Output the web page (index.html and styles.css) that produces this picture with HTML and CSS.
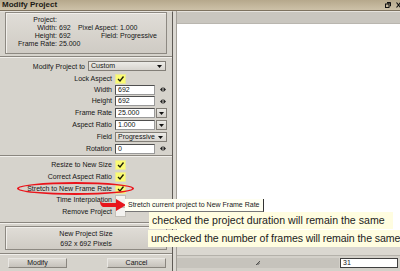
FILE: index.html
```html
<!DOCTYPE html>
<html>
<head>
<meta charset="utf-8">
<link rel="stylesheet" href="styles.css">
</head>
<body>
<div class="window">
  <div class="titlebar">
    <span class="title">Modify Project</span>
    <span class="tb-icons">
      <svg class="tb-restore" width="6" height="6" viewBox="0 0 6 6"><path d="M2 0.5H5.5V4H4.5" fill="none" stroke="#111" stroke-width="1"/><rect x="0.5" y="2" width="3.5" height="3.5" fill="none" stroke="#111" stroke-width="1"/><path d="M2 1H5.5" stroke="#111" stroke-width="1.2"/></svg>
      <svg class="tb-close" width="5" height="6" viewBox="0 0 5 6"><path d="M0.5 0.5L4.5 5.5M4.5 0.5L0.5 5.5" stroke="#111" stroke-width="1.2"/></svg>
    </span>
  </div>
  <div class="body">
    <div class="left">
      <div class="info">
        <div class="info-grid">
          <span class="k">Project:</span><span></span><span></span><span></span>
          <span class="k">Width:</span><span class="v">692</span><span class="k">Pixel Aspect:</span><span class="v">1.000</span>
          <span class="k">Height:</span><span class="v">692</span><span class="k">Field:</span><span class="v">Progressive</span>
          <span class="k">Frame Rate:</span><span class="v">25.000</span><span></span><span></span>
        </div>
      </div>
      <div class="sep"></div>
      <div class="modify-row">
        <span class="modify-label">Modify Project to</span>
        <div class="select wide"><span>Custom</span><svg class="dd" width="5" height="3" viewBox="0 0 5 3"><path d="M0 0H5L2.5 3Z" fill="#111"/></svg></div>
      </div>
      <div class="controls">
        <span class="lbl">Lock Aspect</span>
        <div class="ctl"><div class="cb on"><svg width="9" height="8" viewBox="0 0 9 8"><path d="M2 4L4 6L7.5 1.5" fill="none" stroke="#1d1d08" stroke-width="1.3"/></svg></div></div>

        <span class="lbl">Width</span>
        <div class="ctl"><div class="input">692</div><svg class="spin" width="6" height="5" viewBox="0 0 6 5"><path d="M0 2.5L2.5 0V5Z M6 2.5L3.5 0V5Z" fill="#222"/></svg></div>

        <span class="lbl">Height</span>
        <div class="ctl"><div class="input">692</div><svg class="spin" width="6" height="5" viewBox="0 0 6 5"><path d="M0 2.5L2.5 0V5Z M6 2.5L3.5 0V5Z" fill="#222"/></svg></div>

        <span class="lbl">Frame Rate</span>
        <div class="ctl"><div class="input">25.000</div><div class="ddbtn"><svg width="5" height="3" viewBox="0 0 5 3"><path d="M0 0H5L2.5 3Z" fill="#111"/></svg></div></div>

        <span class="lbl">Aspect Ratio</span>
        <div class="ctl"><div class="input">1.000</div><div class="ddbtn"><svg width="5" height="3" viewBox="0 0 5 3"><path d="M0 0H5L2.5 3Z" fill="#111"/></svg></div></div>

        <span class="lbl">Field</span>
        <div class="ctl"><div class="select field"><span>Progressive</span><svg class="dd" width="5" height="3" viewBox="0 0 5 3"><path d="M0 0H5L2.5 3Z" fill="#111"/></svg></div></div>

        <span class="lbl">Rotation</span>
        <div class="ctl"><div class="input">0</div><svg class="spin" width="6" height="5" viewBox="0 0 6 5"><path d="M0 2.5L2.5 0V5Z M6 2.5L3.5 0V5Z" fill="#222"/></svg></div>
      </div>
      <div class="sep s2"></div>
      <div class="checks">
        <span class="lbl">Resize to New Size</span>
        <div class="ctl"><div class="cb on"><svg width="9" height="8" viewBox="0 0 9 8"><path d="M2 4L4 6L7.5 1.5" fill="none" stroke="#1d1d08" stroke-width="1.3"/></svg></div></div>
        <span class="lbl">Correct Aspect Ratio</span>
        <div class="ctl"><div class="cb on"><svg width="9" height="8" viewBox="0 0 9 8"><path d="M2 4L4 6L7.5 1.5" fill="none" stroke="#1d1d08" stroke-width="1.3"/></svg></div></div>
        <span class="lbl">Stretch to New Frame Rate</span>
        <div class="ctl"><div class="cb on"><svg width="9" height="8" viewBox="0 0 9 8"><path d="M2 4L4 6L7.5 1.5" fill="none" stroke="#1d1d08" stroke-width="1.3"/></svg></div></div>
        <span class="lbl">Time Interpolation</span>
        <div class="ctl"><div class="cb off"></div></div>
        <span class="lbl">Remove Project</span>
        <div class="ctl"><div class="cb off"></div></div>
      </div>
      <div class="sep s3"></div>
      <div class="newsize">
        <div class="ns1">New Project Size</div>
        <div class="ns2">692 x 692 Pixels</div>
      </div>
      <div class="sep s4"></div>
      <div class="buttons">
        <div class="btn">Modify</div>
        <div class="btn">Cancel</div>
      </div>
    </div>
    <div class="divider"></div>
    <div class="right">
      <div class="rstrip"></div>
      <div class="rhead"></div>
      <div class="canvas"></div>
      <div class="rgrey"></div>
      <div class="rfoot">
        <div class="hscroll"><svg width="4" height="4" viewBox="0 0 4 4"><path d="M0 4L4 0M1.5 4L4 1.5" stroke="#333" stroke-width="0.8"/></svg></div>
        <div class="framebox">31</div>
      </div>
    </div>
  </div>

  <div class="ring"></div>
  <svg class="arrow" width="28" height="14" viewBox="0 0 28 14"><path d="M1 3C2 4 3 5 5 5H17V1L27 7L17 13V9H5C3 9 1 7 1 3Z" fill="#e8151b"/></svg>
  <div class="tooltip">Stretch current project to New Frame Rate</div>
  <div class="note n1">checked the project duration will remain the same</div>
  <div class="note n2">unchecked the number of frames will remain the same</div>
</div>
</body>
</html>
```

FILE: styles.css
```css
* { box-sizing: border-box; margin: 0; padding: 0; }
html, body { width: 400px; height: 271px; overflow: hidden; }
body {
  font-family: "Liberation Sans", Arial, sans-serif;
  font-size: 7px;
  color: #151515;
  background: #d5d2cb;
}
.window {
  position: relative;
  width: 400px;
  height: 271px;
  display: flex;
  flex-direction: column;
  background: #d5d2cb;
}
.titlebar {
  height: 11px;
  flex: none;
  display: flex;
  align-items: center;
  justify-content: space-between;
  padding-left: 2px;
  background: linear-gradient(#b6a88c, #cdc1a8);
  border-bottom: 1px solid #7d725f;
  font-weight: bold;
  font-size: 8px;
  line-height: 10px;
  color: #1c1a16;
}
.tb-icons { display: flex; align-items: center; gap: 5px; margin-right: -1px; }
.body { flex: 1; display: flex; min-height: 0; }

.left {
  width: 173px;
  flex: none;
  border-right: 1px solid #5f5b55;
  display: flex;
  flex-direction: column;
  background: #d6d3cc;
  border-top: 1px solid #e6e3dd;
}
.divider {
  width: 4px;
  flex: none;
  background: #dcd9d3;
  border-right: 1px solid #a29e97;
}
.right { flex: 1; display: flex; flex-direction: column; }

.info {
  margin: 0 5px 0 5px;
  height: 42px;
  border: 1px solid #8d8982;
  box-shadow: inset 1px 1px 0 #f2f0ec;
  background: linear-gradient(#e0ddd7, #cfcbc4);
  padding-top: 3px;
}
.info-grid {
  display: grid;
  grid-template-columns: 51px 18px 43px auto;
  line-height: 8px;
}
.k { text-align: right; white-space: nowrap; }
.v { padding-left: 2px; white-space: nowrap; }

.sep {
  height: 2px;
  margin-top: 2px;
  border-top: 1px solid #8a867f;
  border-bottom: 1px solid #f1efeb;
  flex: none;
}
.modify-row {
  margin-top: 3px;
  height: 10px;
  display: flex;
  align-items: center;
}
.modify-label { width: 86px; text-align: right; padding-right: 1px; }
.select {
  height: 10px;
  display: flex;
  align-items: center;
  justify-content: space-between;
  padding: 0 3px 0 2px;
  border: 1px solid #827e77;
  background: linear-gradient(#ecebe7, #d7d4ce);
  line-height: 8px;
}
.select.wide { width: 78px; margin-left: 2px; }
.select.field { width: 52px; }

.controls, .checks {
  display: grid;
  grid-template-columns: 112px auto;
  column-gap: 3px;
  align-items: center;
}
.controls { margin-top: 2px; grid-template-rows: 11px 11px 12px 12px 12px 12px 11px; }
.checks { margin-top: 2px; grid-template-rows: 12px 12px 11px 12px 12px; }
.lbl { text-align: right; white-space: nowrap; line-height: 8px; }
.ctl { display: flex; align-items: center; height: 10px; }

.cb {
  width: 11px;
  height: 10px;
  display: flex;
  align-items: center;
  justify-content: center;
}
.cb.on { background: #fbfb74; border: 1px solid #e9e99a; }
.cb.off { background: #f3f2ef; border: 1px solid #c2bfb8; }

.input {
  width: 40px;
  height: 10px;
  background: #fff;
  border: 1px solid #4f4f4f;
  border-right-color: #9a9a9a;
  border-bottom-color: #9a9a9a;
  padding-left: 2px;
  line-height: 8px;
}
.spin { margin-left: 5px; }
.ddbtn {
  width: 11px;
  height: 10px;
  margin-left: 1px;
  border: 1px solid #827e77;
  background: linear-gradient(#ecebe7, #d3d0ca);
  display: flex;
  align-items: center;
  justify-content: center;
}

.sep.s2 { margin-top: 1px; }
.sep.s3 { margin-top: 4px; }
.sep.s4 { margin-top: 3px; }

.newsize {
  margin: 2px 5px 0 5px;
  height: 24px;
  border: 1px solid #8d8982;
  box-shadow: inset 1px 1px 0 #f2f0ec;
  background: linear-gradient(#e0ddd7, #cfcbc4);
  padding-top: 2px;
  text-align: center;
  line-height: 10px;
}
.buttons {
  margin-top: 3px;
  display: flex;
  justify-content: space-between;
  padding: 0 6px 0 8px;
}
.btn {
  width: 59px;
  height: 10px;
  border: 1px solid #8a867f;
  border-top-color: #e9e7e3;
  border-left-color: #e9e7e3;
  background: linear-gradient(#dedbd5, #c6c2bb);
  text-align: center;
  line-height: 8px;
}

.rstrip { height: 1px; background: #e6e3dd; flex: none; }
.rhead { height: 12px; background: #c9c6bf; flex: none; border-bottom: 1px solid #b9b6af; }
.canvas { flex: 1; background: #fff; }
.rgrey { height: 9px; background: #dad7d0; flex: none; }
.rfoot {
  height: 16px;
  flex: none;
  display: flex;
  align-items: flex-start;
  background: #d3d0c9;
  border-top: 1px solid #b4b1aa;
  padding-top: 2px;
}
.hscroll {
  width: 162px;
  height: 10px;
  background: #c6c3bc;
  display: flex;
  align-items: center;
  justify-content: center;
}
.framebox {
  width: 58px;
  height: 10px;
  margin-left: 1px;
  background: #fff;
  border: 1px solid #3f3f3f;
  padding-left: 2px;
  line-height: 8px;
  font-size: 7px;
}

.ring {
  position: absolute;
  left: 17px;
  top: 182px;
  width: 117px;
  height: 13px;
  border: 2px solid #ea141b;
  border-radius: 50%;
}
.arrow { position: absolute; left: 99px; top: 198px; }
.tooltip {
  position: absolute;
  left: 125px;
  top: 199px;
  height: 13px;
  padding: 0 3px 0 3px;
  background: #fffff2;
  border-right: 1px solid #333;
  border-bottom: 1px solid #777;
  line-height: 12px;
  font-size: 7px;
  color: #1a1a1a;
  white-space: nowrap;
}
.note {
  position: absolute;
  height: 17px;
  background: #fffde0;
  font-size: 10.6px;
  line-height: 17px;
  padding-left: 3px;
  color: #1b1b1b;
  white-space: nowrap;
}
.n1 { left: 149px; top: 212px; width: 244px; }
.n2 { left: 148px; top: 230px; width: 252px; letter-spacing: -0.1px; }
```
